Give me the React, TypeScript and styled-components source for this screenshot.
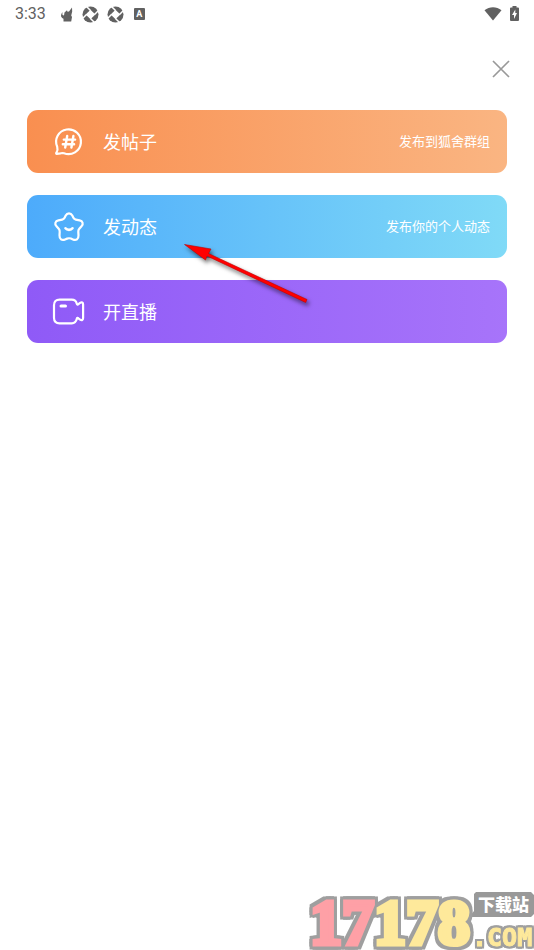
import React from "react";
import styled, { createGlobalStyle } from "styled-components";

const GlobalStyle = createGlobalStyle`
  * { box-sizing: border-box; }
  body { margin: 0; background: #fff; font-family: "Noto Sans CJK SC", sans-serif; }
  button { font: inherit; border: 0; cursor: pointer; }
`;

const Page = styled.div`
  position: relative;
  display: flex;
  flex-direction: column;
  min-height: 100vh;
  overflow: hidden;
`;

const StatusBar = styled.header`
  display: flex;
  align-items: center;
  height: 28px;
  padding: 0 15px;
  color: #616161;
`;

const Clock = styled.time`
  font: 400 16px/28px Roboto, sans-serif;
  margin-right: 14px;
`;

const StatusIcons = styled.div<{ $end?: boolean }>`
  display: flex;
  align-items: center;
  gap: 8px;
  margin-left: ${(p) => (p.$end ? "auto" : "0")};
  svg { display: block; }
`;

const TopBar = styled.div`
  display: flex;
  justify-content: flex-end;
  align-items: center;
  height: 82px;
  padding-right: 20px;
`;

const CloseButton = styled.button`
  display: grid;
  place-items: center;
  width: 26px;
  height: 26px;
  padding: 0;
  background: none;
`;

const Actions = styled.main`
  position: relative;
  display: flex;
  flex-direction: column;
  gap: 22px;
  padding: 0 27px;
`;

const ActionButton = styled.button<{ $from: string; $to: string }>`
  display: flex;
  align-items: center;
  width: 100%;
  height: 63px;
  padding: 0 17px 0 24px;
  border-radius: 11px;
  color: #fff;
  background: linear-gradient(90deg, ${(p) => p.$from}, ${(p) => p.$to});
  svg { display: block; margin-right: 16px; flex: none; }
`;

const Title = styled.span`
  padding-bottom: 2px;
  font-size: 18px;
  line-height: 26px;
`;

const Hint = styled.span`
  margin-left: auto;
  padding-bottom: 2px;
  font-size: 13px;
  line-height: 20px;
`;

const Pointer = styled.svg`
  position: absolute;
  left: 180px;
  top: 130px;
  pointer-events: none;
  filter: drop-shadow(2px 3px 2px rgba(0, 0, 0, 0.55));
`;

const Watermark = styled.svg`
  position: absolute;
  right: 0;
  bottom: 0;
  pointer-events: none;
`;

const Outlined = styled.g<{ $size: number }>`
  font-weight: 700;
  filter: ${(p) =>
    [[1, 0], [-1, 0], [0, 1], [0, -1]]
      .map(([x, y]) => `drop-shadow(${x * p.$size}px ${y * p.$size}px 0 #9f9f9f)`)
      .join(" ")};
`;

const Fox = () => (
  <svg width="14" height="16" viewBox="0 0 14 16" fill="currentColor" aria-hidden="true">
    <path d="M3.500 15.500v-2.800C1.500 12 .6 10.500 1.200 8.500L2.300 6l.2 3 1.500.6L4.500 6.500 7 4.200l.5 1.500 1.500-.2L12 1.500l.2 4-1 4 .8 1.500-.8 4.500z" />
  </svg>
);

const Shutter = () => (
  <svg width="17" height="17" viewBox="0 0 17 17" aria-hidden="true">
    <circle cx="8.500" cy="8.500" r="8" fill="currentColor" />
    <path d="m8.500 3.700 4.800 4.800-4.800 4.800-4.800-4.800z" fill="#fff" />
    <path d="M8.500 4.500 4 0M12.500 8.500l4.500-4.500M8.500 12.500 13 17M4.500 8.500 0 13" stroke="#fff" strokeWidth="1.500" />
  </svg>
);

const LetterBadge = styled.span`
  display: grid;
  place-items: center;
  width: 11px;
  height: 12px;
  margin-left: 2px;
  border-radius: 1px;
  background: #616161;
  color: #fff;
  font: 700 9px/12px Roboto, sans-serif;
`;

const PostIcon = () => (
  <svg width="36" height="36" viewBox="0 0 36 36" fill="none" stroke="#fff" strokeWidth="2.200" strokeLinecap="round" strokeLinejoin="round">
    <path d="M6.200 22.800A12.400 12.400 0 1 1 13 29.300c-1.400-.5-2.200-.2-3.500.1l-3.800.4c-.5 0-.7-.4-.4-.8 1.200-1.800 1.700-3.800.9-6.200z" />
    <path d="m16.200 12-2 11.500M22.400 12l-2 11.500M12.800 15.600h11.300M11.800 20.300h11.300" strokeWidth="2.400" />
  </svg>
);

const StarIcon = () => (
  <svg width="36" height="36" viewBox="0 0 36 36" fill="none" stroke="#fff" strokeWidth="2.200" strokeLinecap="round" strokeLinejoin="round">
    <path d="M14.700 6.600c1.500-3 5.100-3 6.600 0l1.100 2.200c.5 1 1.300 1.600 2.400 1.800l3.800.7c3.200.6 4.100 3.800 1.900 6l-2.200 2.500c-.8.9-1.100 1.900-1 3.100l.2 3.500c.2 3.700-2.400 5.400-5.600 4l-2-.8c-1.300-.5-2.500-.5-3.800 0l-2 .8c-3.200 1.400-5.800-.3-5.600-4l.2-3.500c.1-1.200-.2-2.200-1-3.100l-2.200-2.500c-2.200-2.200-1.300-5.400 1.900-6l3.800-.7c1.100-.2 1.900-.8 2.400-1.800z" />
    <path d="M14.500 19.300c1.600 2.100 5.400 2.100 7 0" strokeWidth="2.600" />
  </svg>
);

const VideoIcon = () => (
  <svg width="36" height="36" viewBox="0 0 36 36" fill="none" stroke="#fff" strokeWidth="2.200" strokeLinecap="round" strokeLinejoin="round">
    <path d="M8.500 5.700h12.300c3 0 4.400 1.600 5 4.100.2.900 1 1 1.600.4l1.700-1.300c1.700-1.100 3-.3 3 1.500v13.700c0 1.800-1.300 2.600-3 1.500l-1.700-1.300c-.6-.6-1.400-.5-1.600.4-.6 2.500-2 4.600-5 4.600H8.500c-3.500 0-5.500-2-5.500-5.500V11.200c0-3.500 2-5.500 5.500-5.500z" />
    <path d="M10 12h4.500" strokeWidth="3" />
  </svg>
);

const actions = [
  { title: "发帖子", hint: "发布到狐舍群组", from: "#f98f50", to: "#fab582", icon: <PostIcon /> },
  { title: "发动态", hint: "发布你的个人动态", from: "#4dabfb", to: "#80daf7", icon: <StarIcon /> },
  { title: "开直播", hint: "", from: "#8f5af7", to: "#a774fa", icon: <VideoIcon /> },
];

export default function App() {
  return (
    <Page>
      <GlobalStyle />
      <StatusBar>
        <Clock>3:33</Clock>
        <StatusIcons>
          <Fox />
          <Shutter />
          <Shutter />
          <LetterBadge>A</LetterBadge>
        </StatusIcons>
        <StatusIcons $end>
          <svg width="18" height="16" viewBox="0 0 18 16" fill="currentColor" role="img" aria-label="Wi-Fi">
            <path d="M0.500 4.200C5.500.2 12.500.2 17.500 4.200L9 14.500z" />
          </svg>
          <svg width="9" height="16" viewBox="0 0 9 16" role="img" aria-label="Battery">
            <path d="M2.500 0h4v1.500H8q1 0 1 1V14q0 1-1 1H1q-1 0-1-1V2.500q0-1 1-1h1.500z" fill="currentColor" />
            <path d="M5.300 3.500 2 9h2v4l3-6H5.300z" fill="#fff" />
          </svg>
        </StatusIcons>
      </StatusBar>
      <TopBar>
        <CloseButton type="button" aria-label="关闭">
          <svg width="18" height="18" viewBox="0 0 18 18" stroke="#999" strokeWidth="1.700">
            <path d="m1 1 16 16M17 1 1 17" />
          </svg>
        </CloseButton>
      </TopBar>
      <Actions>
        {actions.map((a) => (
          <ActionButton key={a.title} type="button" $from={a.from} $to={a.to}>
            {a.icon}
            <Title>{a.title}</Title>
            {a.hint && <Hint>{a.hint}</Hint>}
          </ActionButton>
        ))}
        <Pointer width="132" height="66" viewBox="0 0 132 66" aria-hidden="true">
          <path d="M4.500 4.500 31 9l-2.500 4.500L127 59.500l-1.300 3L27 16l-1.500 4z" fill="#f00" stroke="#c00000" strokeWidth=".6" />
        </Pointer>
      </Actions>
      <Watermark width="228" height="64" viewBox="0 0 228 64" role="img" aria-label="17178.com 下载站">
        <path d="M170 6h55l3 3v19l-3 3h-62l5-6V8z" fill="#999" />
        <Outlined $size={3}>
          <text x="4" y="58" fontFamily="Liberation Serif, serif" fontSize="64" strokeWidth="5" fill="#fee99b" stroke="#fee99b">
            <tspan fill="#fea0a6" stroke="#fea0a6">17</tspan>178
          </text>
        </Outlined>
        <Outlined $size={2}>
          <text x="166" y="60" fontFamily="DejaVu Sans Mono, monospace" fontSize="25" strokeWidth="1" fill="#fee99b" stroke="#fee99b">.COM</text>
        </Outlined>
        <text x="172" y="25" fontFamily="Noto Sans CJK SC, sans-serif" fontWeight="900" fontSize="17" fill="#fff">下载站</text>
      </Watermark>
    </Page>
  );
}
